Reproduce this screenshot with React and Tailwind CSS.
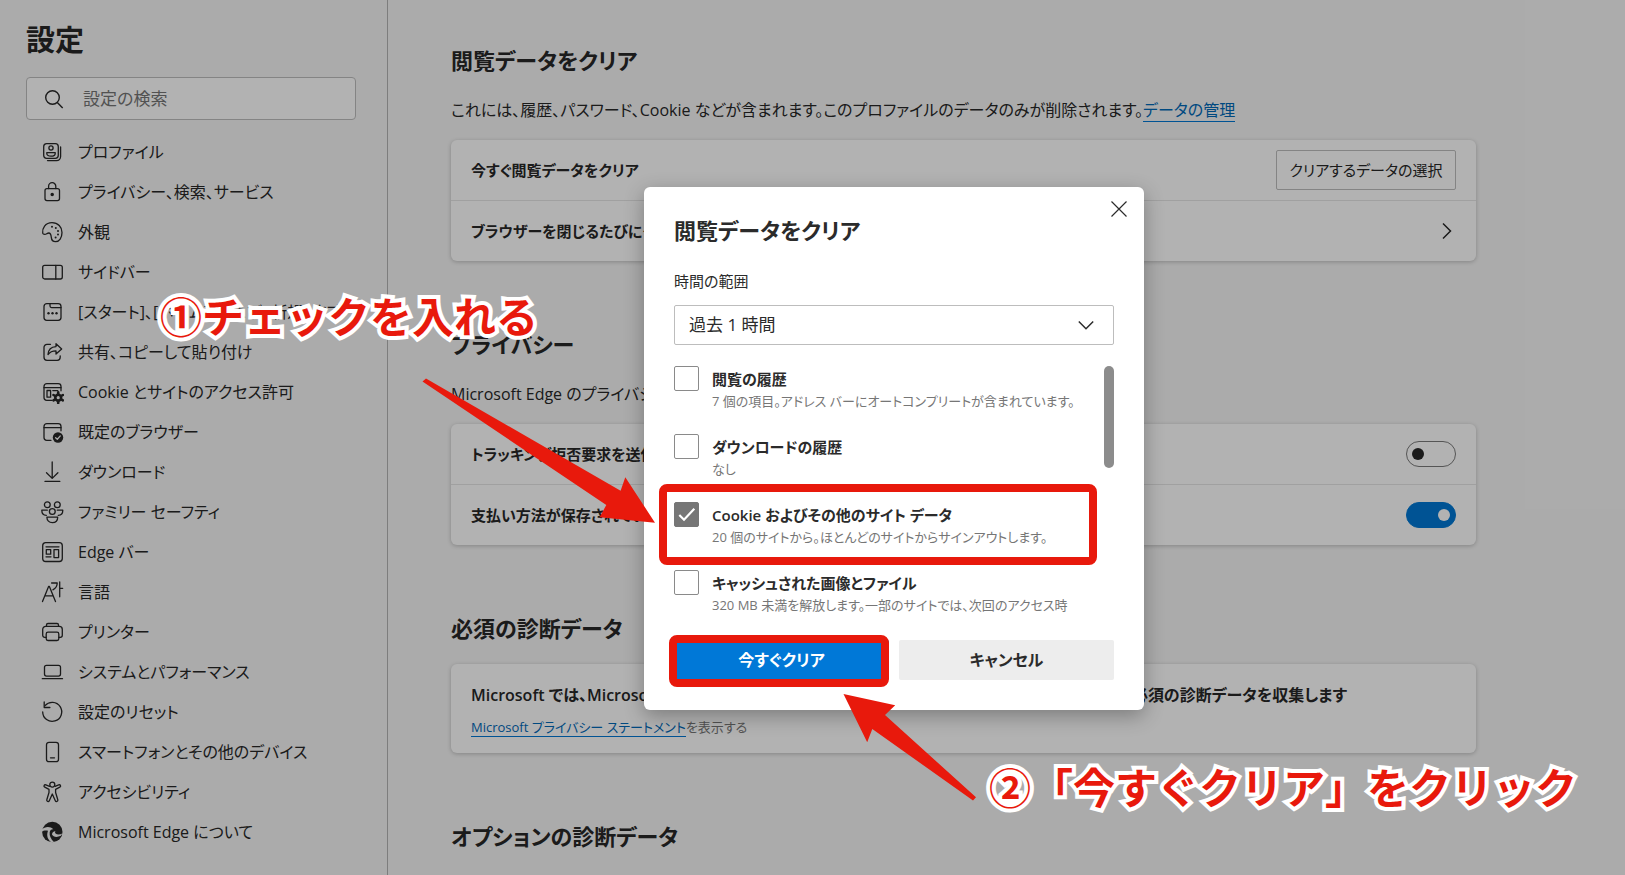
import React from "react";

const icons = {
  profile: (
    <>
      <rect x="3.7" y="3.7" width="14.6" height="14.6" rx="3" />
      <circle cx="11" cy="8" r="2.1" />
      <path d="M6.8 12.6h8.4v.8c0 2-2 2.8-4.2 2.8s-4.2-.8-4.2-2.8z" />
      <path d="M20.6 7v9.600a4 4 0 0 1-4 4H7.500" />
    </>
  ),
  lock: (
    <>
      <rect x="5" y="8.600" width="14.500" height="12" rx="2" />
      <path d="M8.600 8.500V6.300a3.600 3.600 0 0 1 7.200 0v2.200" />
      <circle cx="12.200" cy="14.600" r="1.100" fill="currentColor" />
    </>
  ),
  palette: (
    <>
      <path d="M2.700 13.200C2 8.500 5.300 2.700 12 2.700c6 0 10 4.300 10 9.800 0 5.200-2.700 9.200-6.400 9.200-3 0-4.100-1.900-4.300-4.300-.2-2-.4-4.400-2.500-4.400-1.700 0-2.400 1.400-4 1.400-1.100 0-1.900-.4-2.100-1.200z" />
      <g fill="currentColor" stroke="none">
        <circle cx="12" cy="6.700" r="1" />
        <circle cx="15.800" cy="7.900" r="1" />
        <circle cx="18" cy="11" r="1" />
        <circle cx="18" cy="14.600" r="1" />
        <circle cx="15.600" cy="17.400" r="1" />
      </g>
    </>
  ),
  sidebar: (
    <>
      <rect x="2.700" y="5.300" width="19.600" height="13.700" rx="2" />
      <path d="M15.800 5.300V19" />
    </>
  ),
  start: (
    <>
      <rect x="4" y="3.700" width="17" height="16.600" rx="2.800" />
      <path d="M10 3.700v2.400a1.500 1.500 0 0 0 1.500 1.500H21" />
      <g fill="currentColor" stroke="none">
        <circle cx="8.500" cy="13.300" r="1.200" />
        <circle cx="12.500" cy="13.300" r="1.200" />
        <circle cx="16.500" cy="13.300" r="1.200" />
      </g>
    </>
  ),
  share: (
    <>
      <path d="M10.500 4.300H7a3 3 0 0 0-3 3v10a3 3 0 0 0 3 3h10.200a3 3 0 0 0 3-3v-1.500" />
      <path d="M16 3.700l5.700 5.200-5.700 5.200v-3.200c-3.600 0-6 .9-8 3.600.3-4.500 3-7.600 8-7.900z" />
    </>
  ),
  cookie: (
    <>
      <path d="M12 20.300H6.800A2.800 2.800 0 0 1 4 17.500V6.500a2.800 2.800 0 0 1 2.800-2.800h11.400A2.800 2.800 0 0 1 21 6.500v4.300" />
      <path d="M4 7.700h17M12.800 10.600h5" />
      <rect x="7" y="10.500" width="3.600" height="6.700" />
      <circle cx="18.200" cy="17.700" r="2.900" strokeWidth="2.600" />
      <path d="M18.200 12.300v2M18.200 21.100v2M13.500 15l1.700 1M21.200 19.400l1.700 1M13.500 20.400l1.700-1M21.200 16l1.700-1" strokeWidth="2.600" />
    </>
  ),
  browser: (
    <>
      <path d="M11 20.300H6.800A2.800 2.800 0 0 1 4 17.500V6.500a2.800 2.800 0 0 1 2.800-2.800h11.400A2.800 2.800 0 0 1 21 6.500v4.300" />
      <path d="M4 7.700h17" />
      <circle cx="18" cy="17.500" r="5.200" fill="currentColor" stroke="none" />
      <path d="M15.600 17.700l1.700 1.600 3-3.400" stroke="#f5f5f5" />
    </>
  ),
  download: <path d="M12.200 2v16M6.500 12.800l5.700 5.600 5.700-5.600M5 21.400h14.800" />,
  family: (
    <>
      <circle cx="7.300" cy="4.700" r="2.900" />
      <circle cx="17.300" cy="4.700" r="2.900" />
      <circle cx="12.300" cy="11.500" r="2.900" />
      <path d="M7.300 10.200H1.800c0 3 1.500 5 4.500 5.200M17.300 10.200h5.500c0 3-1.500 5-4.500 5.200" />
      <path d="M6.900 17.200h10.800c0 3.300-2.200 5.400-5.400 5.400s-5.400-2.100-5.400-5.400z" />
    </>
  ),
  edgeBar: (
    <>
      <rect x="2.700" y="2.700" width="19.600" height="18.800" rx="3" />
      <path d="M6 6.800h13M6 16.800h5" />
      <rect x="6.300" y="9.600" width="4.400" height="4.600" />
      <rect x="14" y="9.600" width="4.600" height="8" />
    </>
  ),
  language: (
    <>
      <path d="M2.500 21.600L8.700 6.300h.6l6.200 15.300M5 15.800h8" />
      <path d="M11.600 3h5.600c0 3.300-1.600 5.500-4.300 6.800M19.700 1.800v15M19.700 8.300h3" />
    </>
  ),
  printer: (
    <>
      <path d="M6.500 6.400V5a1.500 1.500 0 0 1 1.500-1.500h9A1.500 1.500 0 0 1 18.500 5v1.400" />
      <path d="M6.200 17.300H4.700a2 2 0 0 1-2-2V9.400a3 3 0 0 1 3-3h13.600a3 3 0 0 1 3 3v5.900a2 2 0 0 1-2 2h-1.500" />
      <rect x="6.200" y="12.200" width="12.600" height="8.300" rx="1.800" />
    </>
  ),
  laptop: (
    <>
      <rect x="4.500" y="5.300" width="16" height="10.800" rx="2" />
      <path d="M2.300 18.700h20.200" />
    </>
  ),
  reset: (
    <>
      <path d="M5 5.700A9.500 9.500 0 1 1 2.700 12" />
      <path d="M4.200 2v5.500h5.700" />
    </>
  ),
  phone: (
    <>
      <rect x="6.500" y="2.300" width="12" height="19.400" rx="2.500" />
      <path d="M10.500 17.800h4" />
    </>
  ),
  accessibility: (
    <>
      <circle cx="12.300" cy="4.600" r="2.500" />
      <path d="M9.500 6.300L5.900 4.900c-1.700-.6-2.700 1.500-1.100 2.300L9 9.300v3.200l-2.200 7.300c-.5 1.700 1.800 2.500 2.500.9l3-6.700 3 6.700c.7 1.600 3 .8 2.500-.9l-2.200-7.300V9.300l4.200-2.100c1.600-.8.600-2.900-1.100-2.300l-3.600 1.400" />
    </>
  ),
  edge: (
    <g stroke="none">
      <circle cx="12.300" cy="12" r="10.200" fill="currentColor" />
      <path d="M1.500 9.700C5 6.300 10.500 6.300 13.300 9.300c-2-.2-3.300.9-3.600 2.900-.5 3.600 1.200 6.800 4.200 9.700l-2 .9C7.500 19.800 6.200 15.500 8 10.800 5.500 10.200 3.300 10.500 1.600 12z" fill="#f5f5f5" />
      <path d="M12 14.500c1.300 2.400 4.500 3.300 8.900 1.300l1.400-2.300c-2.300 1.400-5.300 1.500-6.700.1-.7-.8-.7-1.800-.2-2.600-1.700.3-3.500 1.500-3.400 3.500z" fill="#f5f5f5" />
    </g>
  ),
};

const navItems = [
  ["profile", "プロファイル"],
  ["lock", "プライバシー、検索、サービス"],
  ["palette", "外観"],
  ["sidebar", "サイドバー"],
  ["start", "[スタート]、[ホーム]、および [新規] タブ"],
  ["share", "共有、コピーして貼り付け"],
  ["cookie", "Cookie とサイトのアクセス許可"],
  ["browser", "既定のブラウザー"],
  ["download", "ダウンロード"],
  ["family", "ファミリー セーフティ"],
  ["edgeBar", "Edge バー"],
  ["language", "言語"],
  ["printer", "プリンター"],
  ["laptop", "システムとパフォーマンス"],
  ["reset", "設定のリセット"],
  ["phone", "スマートフォンとその他のデバイス"],
  ["accessibility", "アクセシビリティ"],
  ["edge", "Microsoft Edge について"],
];

const clearOptions = [
  { id: "history", title: "閲覧の履歴", note: "7 個の項目。アドレス バーにオートコンプリートが含まれています。" },
  { id: "downloads", title: "ダウンロードの履歴", note: "なし" },
  { id: "cookies", title: "Cookie およびその他のサイト データ", note: "20 個のサイトから。ほとんどのサイトからサインアウトします。", checked: true },
  { id: "cache", title: "キャッシュされた画像とファイル", note: "320 MB 未満を解放します。一部のサイトでは、次回のアクセス時" },
];

function NavIcon({ name }) {
  return (
    <svg viewBox="0 0 24 24" className="size-6 shrink-0" fill="none" stroke="currentColor" strokeWidth="1.3" strokeLinecap="round" strokeLinejoin="round" aria-hidden="true">
      {icons[name]}
    </svg>
  );
}

function Sidebar() {
  return (
    <aside className="w-[388px] shrink-0 border-r border-[#b4b4b4] px-[26px] pt-5">
      <h1 className="text-[29px] leading-10 font-semibold">設定</h1>
      <div className="mt-[17px] flex h-[43px] w-[330px] items-center gap-[18px] rounded-sm border border-[#bdbdbd] bg-white pl-[14px]">
        <svg viewBox="0 0 24 24" className="size-6 shrink-0" fill="none" stroke="currentColor" strokeWidth="1.400" aria-hidden="true">
          <circle cx="11.500" cy="10.500" r="6.800" />
          <path d="M16.300 15.400l5.400 5.500" />
        </svg>
        <input type="search" aria-label="設定の検索" placeholder="設定の検索" className="min-w-0 flex-1 bg-transparent text-[17px] leading-6 outline-none placeholder:text-[#767676]" />
      </div>
      <nav className="mt-3">
        {navItems.map(([icon, label]) => (
          <a key={label} href={"#" + icon} className="flex h-10 items-center gap-[14px] pl-[14px] text-[16px] leading-6 whitespace-nowrap">
            <NavIcon name={icon} />
            {label}
          </a>
        ))}
      </nav>
    </aside>
  );
}

function Card({ children }) {
  return <div className="mt-[18px] divide-y divide-[#e5e5e5] rounded-md bg-white shadow-[0_1px_4px_rgba(0,0,0,0.22)]">{children}</div>;
}

function Row({ label, htmlFor, children }) {
  return (
    <div className="box-content flex h-[60px] items-center justify-between px-5">
      <label htmlFor={htmlFor} className="text-[15px] leading-6 font-semibold">{label}</label>
      {children}
    </div>
  );
}

function Toggle({ id, defaultChecked }) {
  return (
    <input
      id={id}
      type="checkbox"
      role="switch"
      defaultChecked={defaultChecked}
      className="flex h-[26px] w-[50px] appearance-none items-center rounded-full border border-[#7a7a7a] px-[5px] before:size-3 before:rounded-full before:bg-[#272727] checked:justify-end checked:border-[#0078d4] checked:bg-[#0078d4] checked:before:bg-white"
    />
  );
}

function Section({ title, children }) {
  return (
    <section className="mb-[65px]">
      <h2 className="text-[22px] leading-9 font-semibold">{title}</h2>
      {children}
    </section>
  );
}

function Settings() {
  return (
    <main className="min-w-0 flex-1 pt-[42px] pr-6 pl-[63px]">
      <div className="max-w-[1025px]">
        <Section title="閲覧データをクリア">
          <p className="mt-5 text-[16px] leading-6 whitespace-nowrap">
            これには、履歴、パスワード、Cookie などが含まれます。このプロファイルのデータのみが削除されます。
            <a href="#data" className="border-b border-[#0078d4] text-[#0069b8]">データの管理</a>
          </p>
          <Card>
            <Row label="今すぐ閲覧データをクリア" htmlFor="choose">
              <button id="choose" type="button" className="h-10 w-[180px] rounded-xs border border-[#bdbdbd] text-[15px] leading-6 whitespace-nowrap">クリアするデータの選択</button>
            </Row>
            <Row label="ブラウザーを閉じるたびにクリアするデータを選択する" htmlFor="on-close">
              <button id="on-close" type="button" aria-label="開く" className="-mr-[3px]">
                <svg viewBox="0 0 24 24" className="size-6" fill="none" stroke="currentColor" strokeWidth="1.500"><path d="M8 4.500l7.500 7.500L8 19.500" /></svg>
              </button>
            </Row>
          </Card>
        </Section>
        <Section title="プライバシー">
          <p className="mt-5 text-[16px] leading-6 whitespace-nowrap">Microsoft Edge のプライバシー設定を選択します。</p>
          <Card>
            <Row label="トラッキング拒否要求を送信する" htmlFor="dnt"><Toggle id="dnt" /></Row>
            <Row label="支払い方法が保存されているか確認する" htmlFor="pay"><Toggle id="pay" defaultChecked /></Row>
          </Card>
        </Section>
        <Section title="必須の診断データ">
          <Card>
            <div className="px-5 pt-[19px] pb-[14px]">
              <p className="flex w-[876px] max-w-full justify-between text-[16px] leading-6 font-semibold whitespace-nowrap">
                <span>Microsoft では、Microsoft Edge を安全に保つために、</span>
                <span>必須の診断データを収集します</span>
              </p>
              <p className="mt-2 text-[13px] leading-6 text-[#767676]">
                <a href="#privacy" className="border-b border-[#0078d4] text-[#0069b8]">Microsoft プライバシー ステートメント</a>を表示する
              </p>
            </div>
          </Card>
        </Section>
        <h2 className="text-[22px] leading-9 font-semibold">オプションの診断データ</h2>
      </div>
    </main>
  );
}

function Option({ id, title, note, checked }) {
  return (
    <div className="flex h-[68px] gap-[13px]">
      <span className="relative size-[25px] shrink-0">
        <input id={id} type="checkbox" defaultChecked={checked} className="peer block size-full appearance-none rounded-xs border border-[#8a8a8a] checked:border-[#767676] checked:bg-[#767676]" />
        <svg viewBox="0 0 25 25" className="pointer-events-none absolute inset-0 hidden peer-checked:block" fill="none" stroke="white" strokeWidth="2.200"><path d="M5.300 13l4.700 4.700L20.300 6.800" /></svg>
      </span>
      <div className="pt-px whitespace-nowrap">
        <label htmlFor={id} className="block text-[15px] leading-6 font-semibold">{title}</label>
        <p className="text-[13px] leading-5 text-[#767676]">{note}</p>
      </div>
    </div>
  );
}

function Annotations() {
  const caption = "absolute text-[42px] leading-[48px] font-bold whitespace-nowrap text-[#e8190c] [-webkit-text-stroke:8px_white] [font-feature-settings:normal] [paint-order:stroke_fill]";
  return (
    <div className="pointer-events-none">
      <div className="absolute top-[297px] left-[15px] h-[81px] w-[438px] rounded-lg border-8 border-[#e8190c]" />
      <div className="absolute top-[448px] left-[25px] h-[52px] w-[220px] rounded-lg border-8 border-[#e8190c]" />
      <svg viewBox="0 0 500 523" className="absolute top-0 left-0 h-[523px] w-[500px] overflow-visible" fill="#e8190c" aria-hidden="true">
        <path d="M-218 191.500L-23.400 303.700L-18.700 290.300L11 335.700L-44.400 330.300L-37.700 318L-221.500 194.500z" />
        <path d="M199.500 507L251.200 518.300L241 528L332 610.300L329 613.500L228.300 542L223.200 555.300z" />
      </svg>
      <p className={caption + " top-[106px] left-[-484px]"}>①チェックを入れる</p>
      <p className={caption + " top-[577px] left-[345px]"}>②「今すぐクリア」をクリック</p>
    </div>
  );
}

function ClearDataDialog() {
  return (
    <div className="absolute inset-0 flex items-start justify-center overflow-hidden bg-black/30 pt-[187px] pl-[163px]">
      <div role="dialog" aria-labelledby="dialog-title" className="relative w-[500px] rounded-md bg-white px-[30px] pt-[25px] pb-[30px] text-[#2b2b2b] shadow-[0_6px_20px_rgba(0,0,0,0.3)]">
        <button type="button" aria-label="閉じる" className="absolute top-[14px] right-[17px]">
          <svg viewBox="0 0 16 16" className="size-4" fill="none" stroke="currentColor" strokeWidth="1.200"><path d="M.5.5l15 15M15.500.5l-15 15" /></svg>
        </button>
        <h2 id="dialog-title" className="text-[22px] leading-9 font-semibold">閲覧データをクリア</h2>
        <label htmlFor="range" className="mt-[23px] block text-[15px] leading-5">時間の範囲</label>
        <div className="relative mt-[14px]">
          <select id="range" className="block h-10 w-full appearance-none rounded-xs border border-[#bdbdbd] bg-white px-[14px] text-[17px]">
            <option>過去 1 時間</option>
          </select>
          <svg viewBox="0 0 16 16" className="pointer-events-none absolute top-3 right-5 size-4" fill="none" stroke="currentColor" strokeWidth="1.500"><path d="M.8 4.500L8 11.700l7.200-7.200" /></svg>
        </div>
        <div className="mt-[21px] flex h-[254px] justify-between overflow-hidden">
          <div className="min-w-0">
            {clearOptions.map((option) => <Option key={option.id} {...option} />)}
          </div>
          <div className="h-[102px] w-[10px] shrink-0 rounded-full bg-[#8c8c8c]" />
        </div>
        <div className="mt-5 grid grid-cols-2 gap-[10px] text-[16px] leading-6 font-semibold">
          <button type="button" className="h-10 rounded-xs bg-[#0078d7] text-white">今すぐクリア</button>
          <button type="button" className="h-10 rounded-xs bg-[#ededed]">キャンセル</button>
        </div>
        <Annotations />
      </div>
    </div>
  );
}

export default function App() {
  return (
    <div className="relative flex min-h-screen overflow-hidden bg-[#f5f5f5] font-['Open_Sans','Noto_Sans_CJK_JP',sans-serif] text-[#272727] [font-feature-settings:'palt']" lang="ja">
      <Sidebar />
      <Settings />
      <ClearDataDialog />
    </div>
  );
}
